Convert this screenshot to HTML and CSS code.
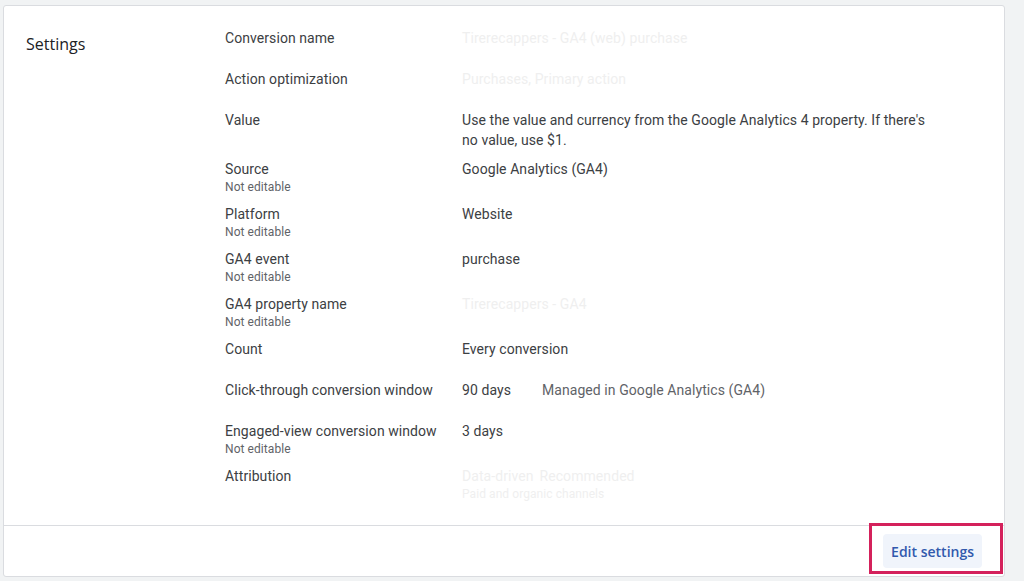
FILE: index.html
```html
<!DOCTYPE html>
<html lang="en">
<head>
<meta charset="utf-8">
<title>Conversion settings</title>
<link rel="stylesheet" href="styles.css">
</head>
<body>
<div class="card">
  <div class="content">
    <h2 class="title">Settings</h2>
    <div class="rows">
      <div class="row">
        <div class="label">Conversion name</div>
        <div class="value faded">Tirerecappers - GA4 (web) purchase</div>
      </div>
      <div class="row">
        <div class="label">Action optimization</div>
        <div class="value faded">Purchases, Primary action</div>
      </div>
      <div class="row">
        <div class="label">Value</div>
        <div class="value">Use the value and currency from the Google Analytics 4 property. If there's no value, use $1.</div>
      </div>
      <div class="row">
        <div class="label">Source<div class="sub">Not editable</div></div>
        <div class="value">Google Analytics (GA4)</div>
      </div>
      <div class="row">
        <div class="label">Platform<div class="sub">Not editable</div></div>
        <div class="value">Website</div>
      </div>
      <div class="row">
        <div class="label">GA4 event<div class="sub">Not editable</div></div>
        <div class="value">purchase</div>
      </div>
      <div class="row">
        <div class="label">GA4 property name<div class="sub">Not editable</div></div>
        <div class="value faded">Tirerecappers - GA4</div>
      </div>
      <div class="row">
        <div class="label">Count</div>
        <div class="value">Every conversion</div>
      </div>
      <div class="row">
        <div class="label">Click-through conversion window</div>
        <div class="value split"><span>90 days</span><span class="managed">Managed in Google Analytics (GA4)</span></div>
      </div>
      <div class="row">
        <div class="label">Engaged-view conversion window<div class="sub">Not editable</div></div>
        <div class="value">3 days</div>
      </div>
      <div class="row">
        <div class="label">Attribution</div>
        <div class="value faded"><div class="split"><span>Data-driven</span><span class="rec">Recommended</span></div><div class="sub faded">Paid and organic channels</div></div>
      </div>
    </div>
  </div>
  <div class="footer">
    <button class="edit">Edit settings</button>
    <div class="highlight"></div>
  </div>
</div>
</body>
</html>
```

FILE: styles.css
```css
html, body {
  margin: 0;
  padding: 0;
}
body {
  background: #f1f3f4;
  font-family: Roboto, "Liberation Sans", Arial, sans-serif;
  color: #3c4043;
  font-size: 14px;
  line-height: 20px;
  letter-spacing: 0.07px;
  height: 581px;
  overflow: hidden;
  padding-top: 5px;
  box-sizing: border-box;
}
.card {
  margin: 0 19px 0 3px;
  background: #fff;
  border: 1px solid #dadce0;
  border-radius: 3px;
  height: 572px;
  box-sizing: border-box;
  display: flex;
  flex-direction: column;
}
.content {
  display: flex;
  padding: 22px 0 22px 22px;
  flex: 1;
}
.title {
  margin: 4px 0 0 0;
  width: 199px;
  flex: none;
  font-family: "Open Sans", Roboto, sans-serif;
  font-weight: 500;
  font-size: 16px;
  line-height: 24px;
  letter-spacing: 0;
  color: #202124;
}
.rows {
  display: flex;
  flex-direction: column;
  gap: 9px;
}
.row {
  display: flex;
  min-height: 32px;
}
.label {
  width: 237px;
  flex: none;
  color: #3c4043;
}
.sub {
  font-size: 12px;
  line-height: 16px;
  color: #5f6368;
}
.value {
  width: 472px;
  color: #3c4043;
}
.faded, .faded .sub {
  color: #efefef;
}
.split {
  display: flex;
  gap: 31px;
}
.faded .split {
  gap: 6px;
}
.managed {
  color: #5f6368;
}
.footer {
  position: relative;
  border-top: 1px solid #dadce0;
  height: 51px;
  box-sizing: border-box;
  display: flex;
  justify-content: flex-end;
  align-items: flex-start;
  padding: 8px 22px 0 0;
}
.edit {
  height: 34px;
  padding: 0 8px;
  border: none;
  border-radius: 4px;
  background: #f0f4fb;
  color: #3159ad;
  font-family: "Open Sans", Roboto, sans-serif;
  font-weight: 600;
  font-size: 14px;
  letter-spacing: 0;
}
.highlight {
  position: absolute;
  left: 865px;
  top: -3px;
  width: 134px;
  height: 51px;
  border: 3px solid #d4215b;
  box-sizing: border-box;
  pointer-events: none;
}
```
